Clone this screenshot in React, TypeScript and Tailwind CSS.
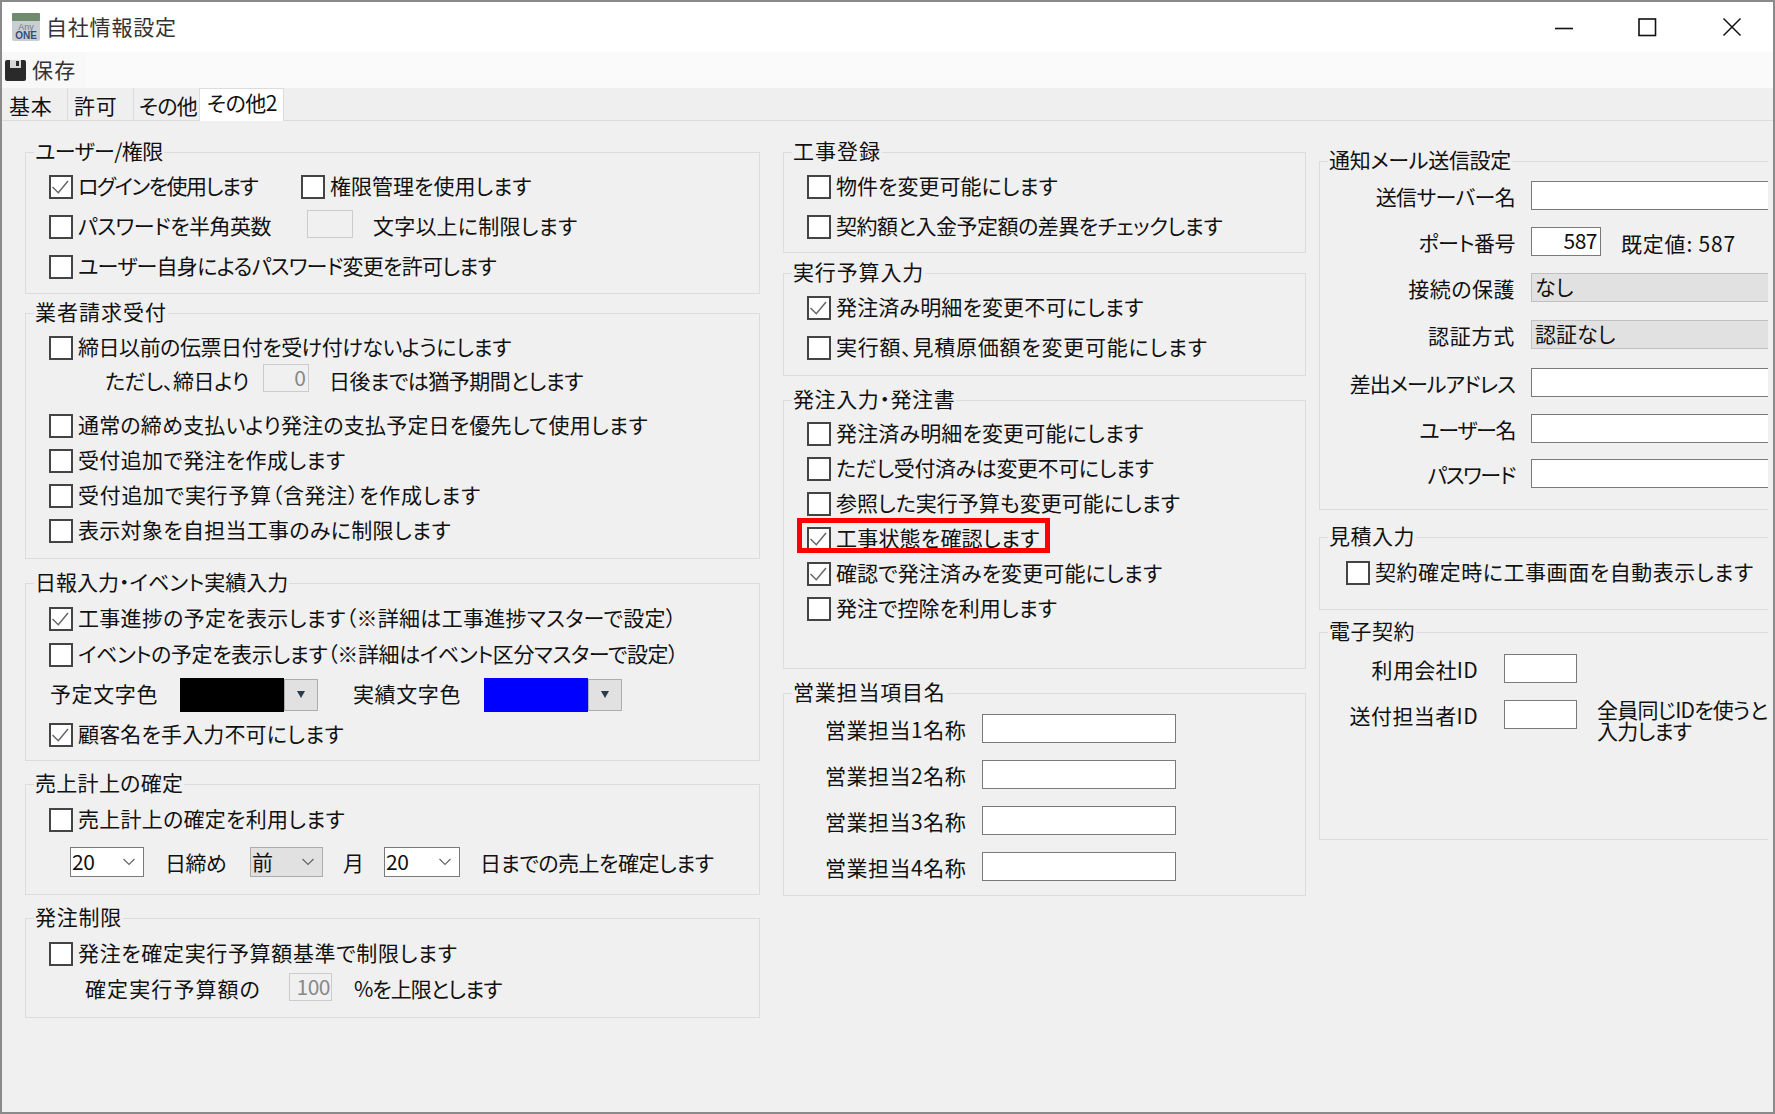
import React from "react";

function Check({ label, checked, mark, text = "" }: { label: string; checked?: boolean; mark?: boolean; text?: string }) {
  return (
    <div className="relative flex items-center">
      <span className="flex h-[24px] w-[24px] shrink-0 items-center justify-center border-2 border-[#444444] bg-white">
        {checked && (
          <svg width="18" height="18" viewBox="0 0 18 18" fill="none">
            <path d="M0.5 9 L6.3 14.7 L16 3" stroke="#666666" strokeWidth="1.5" />
          </svg>
        )}
      </span>
      <span className={`ml-[5px] pb-[3px] whitespace-nowrap ${text}`}>{label}</span>
      {mark && <span className="absolute -top-[9px] -left-[10px] h-[35px] w-[253px] border-[5px] border-[#ff0000]" />}
    </div>
  );
}

function Group({ title, className, text = "", children }: { title: string; className: string; text?: string; children: React.ReactNode }) {
  return (
    <section className={`relative border border-[#dcdcdc] ${className}`}>
      <h2 className={`absolute -top-[16px] left-[8px] whitespace-nowrap bg-[#f0f0f0] px-[1px] text-[21px] leading-[26px] font-normal ${text}`}>{title}</h2>
      {children}
    </section>
  );
}

function Chevron() {
  return (
    <svg width="14" height="8" viewBox="0 0 14 8" fill="none">
      <path d="M1.5 1 L7 6.5 L12.5 1" stroke="#666666" strokeWidth="1.2" />
    </svg>
  );
}

function Select({ value, width, off }: { value: string; width: string; off?: boolean }) {
  return (
    <div className={`flex h-[30px] items-center justify-between border pr-[7px] pl-[1px] tracking-[-0.5px] ${width} ${off ? "border-[#adadad] bg-[#e1e1e1]" : "border-[#7a7a7a] bg-white"}`}>
      <span className="pb-[2px]">{value}</span>
      <Chevron />
    </div>
  );
}

function Colour({ swatch }: { swatch: string }) {
  return (
    <div className="flex items-center">
      <span className={`h-[34px] w-[104px] ${swatch}`} />
      <span className="flex h-[32px] w-[34px] items-center justify-center border border-[#adadad] bg-[#e1e1e1]">
        <svg width="10" height="9" viewBox="0 0 10 9"><path d="M1 1 H9 L5 8 Z" fill="#2b3a4f" /></svg>
      </span>
    </div>
  );
}

function Field({ label, h, value, off, text = "" }: { label: string; h: string; value?: string; off?: boolean; text?: string }) {
  return (
    <div className={`flex items-start ${h}`}>
      <span className={`w-[195px] pt-[1px] text-right leading-[28px] whitespace-nowrap ${text}`}>{label}</span>
      <div className={`ml-[16px] h-[29px] flex-1 border border-r-0 pl-[3px] leading-[24px] ${off ? "border-[#c0c0c0] bg-[#e1e1e1]" : "border-[#7a7a7a] bg-white"}`}>{value}</div>
    </div>
  );
}

function Sales({ label }: { label: string }) {
  return (
    <div className="flex h-[46px] items-center pl-[41px]">
      <span className="w-[157px] pb-[2px] tracking-[0.5px] whitespace-nowrap">{label}</span>
      <span className="-mt-[4px] h-[29px] w-[194px] border border-[#7a7a7a] bg-white" />
    </div>
  );
}

export default function App() {
  return (
    <div className="flex h-[1114px] w-[1775px] flex-col overflow-hidden border-2 border-[#8a8a8a] bg-[#f0f0f0] font-['Noto_Sans_CJK_JP','Noto_Sans',sans-serif] text-[21px] leading-none text-[#111111] [font-feature-settings:'palt']">
      <header className="flex h-[50px] shrink-0 items-center bg-white pl-[10px]">
        <svg width="28" height="28" viewBox="0 0 28 28" className="shrink-0">
          <rect width="28" height="28" rx="2" fill="#c9ced2" />
          <rect width="28" height="8" rx="1" fill="#6f8a6c" />
          <text x="14" y="17" textAnchor="middle" fontSize="9" fontFamily="Liberation Sans" fill="#6b7a8a">Any</text>
          <text x="14" y="26" textAnchor="middle" fontSize="10" fontWeight="bold" fontFamily="Liberation Sans" fill="#2f4f7a">ONE</text>
        </svg>
        <span className="ml-[6px] pb-[2px] tracking-[0.8px] text-[#333333]">自社情報設定</span>
        <div className="ml-auto flex items-center pr-[31px]">
          <svg width="20" height="20" viewBox="0 0 20 20" fill="none" stroke="#111111" className="mr-[63px]"><path d="M1 11.5 H19" strokeWidth="1.6" /></svg>
          <svg width="20" height="20" viewBox="0 0 20 20" fill="none" stroke="#111111" className="mr-[65px]"><rect x="2" y="2" width="16.5" height="16.5" strokeWidth="1.6" /></svg>
          <svg width="20" height="20" viewBox="0 0 20 20" fill="none" stroke="#111111"><path d="M1.5 1.5 L18.5 18.5 M18.5 1.5 L1.5 18.5" strokeWidth="1.5" /></svg>
        </div>
      </header>

      <div className="flex h-[36px] shrink-0 items-center bg-[#fafafa]">
        <div className="flex h-full w-[84px] items-center bg-[#f8f8f8] pl-[3px]">
          <svg width="21" height="21" viewBox="0 0 21 21">
            <path d="M0 2 Q0 0 2 0 H19 Q21 0 21 2 V19 Q21 21 19 21 H2 Q0 21 0 19 Z" fill="#2a2a2a" />
            <rect x="5" y="0" width="11" height="8" fill="#d8d8d8" />
            <rect x="11" y="1" width="3" height="5" fill="#2a2a2a" />
          </svg>
          <span className="ml-[6px] pb-[2px] tracking-[1.3px] text-[#333333]">保存</span>
        </div>
      </div>

      <nav className="flex h-[33px] shrink-0 items-end border-b border-[#dcdcdc] bg-[#efefef] pl-[1px] whitespace-nowrap">
        <span className="flex h-full w-[65px] items-center border-r border-[#dcdcdc] pt-[2px] pl-[6px] tracking-[0.7px]">基本</span>
        <span className="flex h-full w-[66px] items-center border-r border-[#dcdcdc] pt-[2px] pl-[6px] tracking-[0.7px]">許可</span>
        <span className="flex h-full w-[65px] items-center pt-[2px] pl-[5px] tracking-[-0.7px]">その他</span>
        <span className="-mb-px flex h-[33px] w-[85px] items-center border border-b-0 border-[#dcdcdc] bg-white pb-[5px] pl-[7px] tracking-[-0.5px]">その他2</span>
      </nav>

      <main className="ml-[5px] flex w-[1761px] flex-1 gap-[23px] pt-[31px] pl-[18px]">
        <div className="flex w-[735px] shrink-0 flex-col">
          <Group title="ユーザー/権限" text="tracking-[-0.6px]" className="h-[142px] pt-[14px] pl-[23px]">
            <div className="flex h-[40px] items-center">
              <div className="w-[252px]"><Check label="ログインを使用します" text="tracking-[-1.5px]" checked /></div>
              <Check label="権限管理を使用します" />
            </div>
            <div className="flex h-[40px] items-center">
              <div className="w-[258px]"><Check label="パスワードを半角英数" text="tracking-[-0.5px]" /></div>
              <span className="-mt-[6px] h-[28px] w-[46px] border border-[#cccccc]" />
              <span className="ml-[20px] pb-[3px] tracking-[0.2px]">文字以上に制限します</span>
            </div>
            <div className="flex h-[40px] items-center"><Check label="ユーザー自身によるパスワード変更を許可します" text="tracking-[-0.75px]" /></div>
          </Group>

          <Group title="業者請求受付" text="tracking-[1px]" className="mt-[19px] h-[246px] pt-[17px] pl-[23px]">
            <div className="flex h-[34px] items-center"><Check label="締日以前の伝票日付を受け付けないようにします" text="tracking-[-0.45px]" /></div>
            <div className="flex h-[34px] items-center pl-[56px]">
              <span className="w-[158px] pb-[3px] tracking-[-0.4px]">ただし、締日より</span>
              <span className="-mt-[8px] h-[28px] w-[46px] border border-[#cccccc] pr-[2px] text-right leading-[24px] text-[#888888]">0</span>
              <span className="ml-[20px] pb-[3px] tracking-[-0.5px]">日後までは猶予期間とします</span>
            </div>
            <div className="mt-[9px] flex h-[35px] items-center"><Check label="通常の締め支払いより発注の支払予定日を優先して使用します" text="tracking-[0.2px]" /></div>
            <div className="flex h-[35px] items-center"><Check label="受付追加で発注を作成します" text="tracking-[0.35px]" /></div>
            <div className="flex h-[35px] items-center"><Check label="受付追加で実行予算（含発注）を作成します" text="tracking-[0.7px]" /></div>
            <div className="flex h-[35px] items-center"><Check label="表示対象を自担当工事のみに制限します" text="tracking-[0.3px]" /></div>
          </Group>

          <Group title="日報入力・イベント実績入力" className="mt-[24px] h-[178px] pt-[17px] pl-[23px]">
            <div className="flex h-[36px] items-center"><Check label="工事進捗の予定を表示します（※詳細は工事進捗マスターで設定）" text="tracking-[0.3px]" checked /></div>
            <div className="flex h-[35px] items-center"><Check label="イベントの予定を表示します（※詳細はイベント区分マスターで設定）" text="tracking-[-0.4px]" /></div>
            <div className="flex h-[45px] items-center pl-[1px]">
              <span className="w-[130px] pb-[2px] tracking-[0.6px]">予定文字色</span>
              <Colour swatch="bg-black" />
              <span className="ml-[35px] w-[131px] pb-[2px] tracking-[0.6px]">実績文字色</span>
              <Colour swatch="bg-[#0000ff]" />
            </div>
            <div className="flex h-[36px] items-center"><Check label="顧客名を手入力不可にします" text="tracking-[0.15px]" checked /></div>
          </Group>

          <Group title="売上計上の確定" text="tracking-[0.3px]" className="mt-[23px] h-[111px] pt-[17px] pl-[23px]">
            <div className="flex h-[36px] items-center"><Check label="売上計上の確定を利用します" text="tracking-[0.25px]" /></div>
            <div className="mt-[9px] flex h-[30px] items-center pl-[21px]">
              <Select value="20" width="w-[74px]" />
              <span className="ml-[21px] w-[85px] tracking-[-0.6px]">日締め</span>
              <Select value="前" width="w-[73px]" off />
              <span className="ml-[20px] w-[41px]">月</span>
              <Select value="20" width="w-[76px]" />
              <span className="ml-[20px] tracking-[-0.5px]">日までの売上を確定します</span>
            </div>
          </Group>

          <Group title="発注制限" text="tracking-[0.75px]" className="mt-[23px] h-[100px] pt-[17px] pl-[23px]">
            <div className="flex h-[36px] items-center"><Check label="発注を確定実行予算額基準で制限します" text="tracking-[0.65px]" /></div>
            <div className="flex h-[34px] items-center pl-[36px]">
              <span className="w-[204px] pb-[2px] tracking-[1.1px]">確定実行予算額の</span>
              <span className="-mt-[4px] h-[28px] w-[43px] border border-[#cccccc] pr-[1px] text-right leading-[24px] tracking-[-0.5px] text-[#888888]">100</span>
              <span className="ml-[22px] pb-[2px] tracking-[-1px]">%を上限とします</span>
            </div>
          </Group>
        </div>

        <div className="flex w-[523px] shrink-0 flex-col">
          <Group title="工事登録" text="tracking-[1px]" className="h-[101px] pt-[14px] pl-[23px]">
            <div className="flex h-[40px] items-center"><Check label="物件を変更可能にします" /></div>
            <div className="flex h-[40px] items-center"><Check label="契約額と入金予定額の差異をチェックします" text="tracking-[-0.5px]" /></div>
          </Group>
          <Group title="実行予算入力" text="tracking-[0.85px]" className="mt-[20px] h-[103px] pt-[14px] pl-[23px]">
            <div className="flex h-[40px] items-center"><Check label="発注済み明細を変更不可にします" text="tracking-[0.15px]" checked /></div>
            <div className="flex h-[40px] items-center"><Check label="実行額、見積原価額を変更可能にします" text="tracking-[0.75px]" /></div>
          </Group>
          <Group title="発注入力・発注書" text="tracking-[0.6px]" className="mt-[24px] h-[269px] pt-[15px] pl-[23px]">
            <div className="flex h-[35px] items-center"><Check label="発注済み明細を変更可能にします" text="tracking-[0.15px]" /></div>
            <div className="flex h-[35px] items-center"><Check label="ただし受付済みは変更不可にします" text="tracking-[-0.4px]" /></div>
            <div className="flex h-[35px] items-center"><Check label="参照した実行予算も変更可能にします" /></div>
            <div className="flex h-[35px] items-center"><Check label="工事状態を確認します" text="tracking-[0.2px]" checked mark /></div>
            <div className="flex h-[35px] items-center"><Check label="確認で発注済みを変更可能にします" text="tracking-[0.1px]" checked /></div>
            <div className="flex h-[35px] items-center"><Check label="発注で控除を利用します" /></div>
          </Group>
          <Group title="営業担当項目名" text="tracking-[0.8px]" className="mt-[24px] h-[203px] pt-[13px]">
            <Sales label="営業担当1名称" />
            <Sales label="営業担当2名称" />
            <Sales label="営業担当3名称" />
            <Sales label="営業担当4名称" />
          </Group>
        </div>

        <div className="-ml-[10px] flex min-w-0 flex-1 flex-col pt-[9px] pb-[4px]">
          <Group title="通知メール送信設定" text="tracking-[-0.3px]" className="h-[349px] border-r-0 pt-[19px]">
            <Field label="送信サーバー名" text="tracking-[-0.65px]" h="h-[46px]" />
            <div className="flex h-[46px] items-start">
              <span className="w-[195px] pt-[1px] text-right leading-[28px] tracking-[-0.5px]">ポート番号</span>
              <span className="ml-[16px] h-[29px] w-[70px] border border-[#7a7a7a] bg-white pr-[3px] text-right leading-[24px] tracking-[-0.5px]">587</span>
              <span className="ml-[20px] pt-[2px] leading-[28px] tracking-[0.8px]">既定値: 587</span>
            </div>
            <Field label="接続の保護" text="tracking-[0.5px]" h="h-[47px]" value="なし" off />
            <Field label="認証方式" text="tracking-[0.75px]" h="h-[48px]" value="認証なし" off />
            <Field label="差出メールアドレス" text="tracking-[-1px]" h="h-[46px]" />
            <Field label="ユーザー名" text="tracking-[-1.4px]" h="h-[45px]" />
            <Field label="パスワード" text="tracking-[-1.4px]" h="h-[46px]" />
          </Group>
          <Group title="見積入力" text="tracking-[0.5px]" className="mt-[27px] h-[73px] border-r-0 pt-[17px] pl-[26px]">
            <div className="flex h-[36px] items-center"><Check label="契約確定時に工事画面を自動表示します" text="tracking-[0.55px]" /></div>
          </Group>
          <Group title="電子契約" text="tracking-[0.5px]" className="mt-[22px] h-[208px] border-r-0 pt-[21px]">
            <div className="flex h-[46px] items-start">
              <span className="w-[158px] pt-[1px] text-right leading-[28px] tracking-[0.3px]">利用会社ID</span>
              <span className="ml-[26px] h-[29px] w-[73px] border border-[#7a7a7a] bg-white" />
            </div>
            <div className="flex items-start">
              <span className="w-[158px] pt-[1px] text-right leading-[28px] tracking-[0.4px]">送付担当者ID</span>
              <span className="ml-[26px] h-[29px] w-[73px] border border-[#7a7a7a] bg-white" />
              <span className="-mt-[1px] ml-[20px] leading-[21px] tracking-[-0.8px] whitespace-nowrap">全員同じIDを使うと<br />入力します</span>
            </div>
          </Group>
        </div>
      </main>
    </div>
  );
}
